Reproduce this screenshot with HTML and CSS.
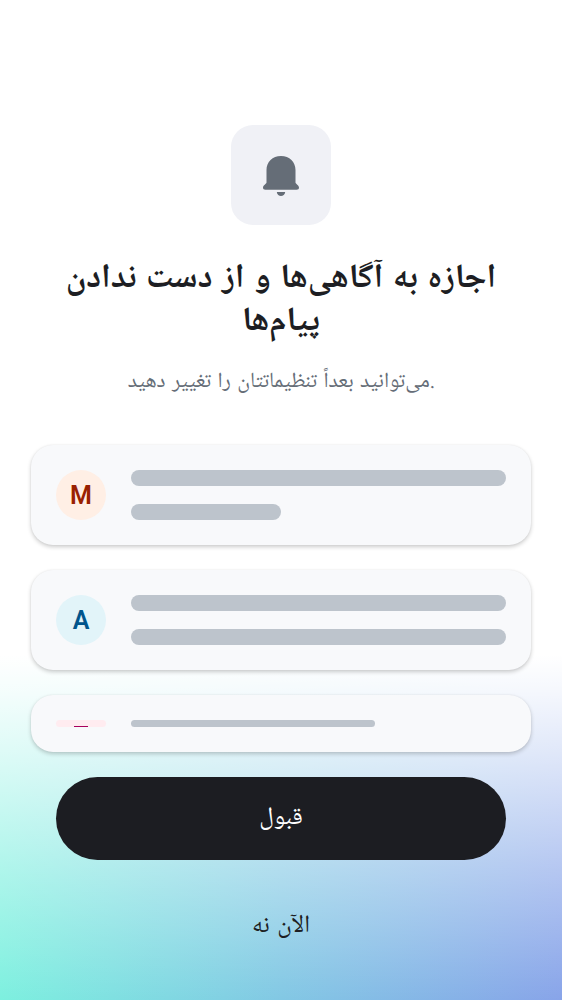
FILE: index.html
```html
<!DOCTYPE html>
<html lang="fa">
<head>
<meta charset="utf-8">
<title>اجازه به آگاهی‌ها</title>
<link rel="stylesheet" href="styles.css">
</head>
<body>
<main class="screen">
  <div class="bell-tile">
    <svg class="bell" viewBox="0 0 40 44"><path d="M20 3C11.500 3 5.500 9 5.500 17v12.500C5.500 31 2 32 2 34.500 2 36 2.800 36.700 4.500 36.700h31c1.700 0 2.500-.7 2.500-2.200 0-2.500-3.500-3.500-3.500-5V17C34.500 9 28.500 3 20 3zM15.800 39h8.400c-.5 5.200-7.900 5.200-8.400 0z"/></svg>
  </div>
  <h1 class="title" dir="rtl">اجازه به آگاهی‌ها و از دست ندادن پیام‌ها</h1>
  <p class="hint">می‌توانید بعداً تنظیماتتان را تغییر دهید.</p>
  <div class="cards">
    <div class="card"><span class="avatar avatar-m">M</span><div class="lines"><i class="line"></i><i class="line short"></i></div></div>
    <div class="card"><span class="avatar avatar-a">A</span><div class="lines"><i class="line"></i><i class="line"></i></div></div>
    <div class="card squashed"><span class="avatar avatar-strip"><i class="dash"></i></span><div class="lines"><i class="line thin"></i></div></div>
  </div>
  <button class="accept">قبول</button>
  <button class="later">الآن نه</button>
</main>
</body>
</html>
```

FILE: styles.css
```css
* { box-sizing: border-box; }
body { margin: 0; font-family: "Noto Naskh Arabic UI", "Noto Naskh Arabic", "Noto Sans Arabic", "Noto Sans", sans-serif; color: #1d1e23; }
.screen {
  height: 1000px;
  padding: 125px 31px 0;
  display: flex;
  flex-direction: column;
  background:
    linear-gradient(180deg, #fff 65.500%, rgba(255, 255, 255, .92) 69%, rgba(255, 255, 255, .75) 75%, rgba(255, 255, 255, .38) 87%, rgba(255, 255, 255, 0) 100%),
    linear-gradient(90deg, #7df0df, #82c8e4 50%, #88a4e9);
}
.bell-tile {
  width: 100px;
  height: 100px;
  flex: none;
  align-self: center;
  border-radius: 22px;
  background: #f0f1f6;
  display: flex;
  align-items: center;
  justify-content: center;
}
.bell { width: 40px; height: 44px; fill: #656d77; }
.title { margin: 33px 0 0; height: 86px; text-align: center; font-weight: 700; font-size: 34px; line-height: 43px; word-spacing: 2px; }
.hint { margin: 23px 0 0; height: 30px; text-align: center; font-size: 21.600px; line-height: 30px; word-spacing: 1.600px; color: #656d77; }
.cards { margin-top: 48px; display: flex; flex-direction: column; gap: 25px; }
.card {
  height: 100px;
  display: flex;
  gap: 25px;
  padding: 25px;
  border-radius: 22px;
  background: #f8f9fb;
  box-shadow: 0 2px 4px rgba(0, 0, 0, .2), 0 0 2px rgba(0, 0, 0, .06);
}
.avatar {
  width: 50px;
  height: 50px;
  flex: none;
  border-radius: 50%;
  display: flex;
  align-items: center;
  justify-content: center;
  padding-top: 1px;
  font: 600 25px/50px Roboto, sans-serif;
}
.avatar-m { background: #ffefe5; color: #992100; }
.avatar-a { background: #e2f4f9; color: #00558c; }
.lines { flex: 1; display: flex; flex-direction: column; justify-content: space-between; }
.line { height: 15.600px; border-radius: 8px; background: #bdc4cc; }
.short { width: 150px; }
.squashed { height: 57px; }
.avatar-strip { height: 7px; border-radius: 4px; background: #ffecf0; align-items: flex-end; }
.dash { width: 14px; height: 1px; background: #a8005c; }
.thin { width: 244px; height: 7px; border-radius: 4px; }
button { border: 0; padding: 0; background: none; font-family: inherit; font-size: 24.500px; word-spacing: 2px; color: #1d1e23; }
.accept { margin: 25px 25px 0; height: 83.300px; padding-bottom: 3px; border-radius: 42px; background: #1c1d22; color: #fff; }
.later { margin: 24px 25px 0; height: 83px; padding-bottom: 1px; }
```
